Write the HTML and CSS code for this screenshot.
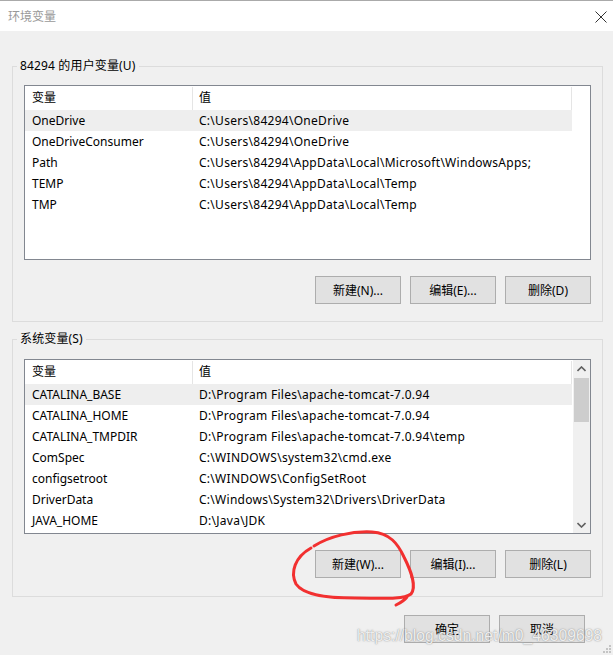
FILE: index.html
```html
<!DOCTYPE html>
<html lang="zh-CN">
<head>
<meta charset="utf-8">
<title>环境变量</title>
<link rel="stylesheet" href="styles.css">
</head>
<body>
<div class="window">
  <div class="titlebar">
    <span class="title">环境变量</span>
    <svg class="close" width="12" height="12" viewBox="0 0 12 12"><path d="M0.5 0.5L11.5 11.5M11.5 0.5L0.5 11.5" stroke="#333" stroke-width="1" fill="none"/></svg>
  </div>
  <div class="content">
    <fieldset class="group group-user">
      <legend>84294 的用户变量(U)</legend>
      <div class="lv lv-user">
        <div class="lv-main">
          <div class="lv-row lv-head"><div class="c1">变量</div><div class="c2">值</div></div>
          <div class="lv-row sel"><div class="c1">OneDrive</div><div class="c2">C:\Users\84294\OneDrive</div></div>
          <div class="lv-row"><div class="c1">OneDriveConsumer</div><div class="c2">C:\Users\84294\OneDrive</div></div>
          <div class="lv-row"><div class="c1">Path</div><div class="c2">C:\Users\84294\AppData\Local\Microsoft\WindowsApps;</div></div>
          <div class="lv-row"><div class="c1">TEMP</div><div class="c2">C:\Users\84294\AppData\Local\Temp</div></div>
          <div class="lv-row"><div class="c1">TMP</div><div class="c2">C:\Users\84294\AppData\Local\Temp</div></div>
        </div>
        <div class="lv-side"></div>
      </div>
      <div class="btns">
        <button class="btn">新建(N)...</button>
        <button class="btn">编辑(E)...</button>
        <button class="btn">删除(D)</button>
      </div>
    </fieldset>

    <fieldset class="group group-sys">
      <legend>系统变量(S)</legend>
      <div class="lv lv-sys">
        <div class="lv-main">
          <div class="lv-row lv-head"><div class="c1">变量</div><div class="c2">值</div></div>
          <div class="lv-row sel"><div class="c1">CATALINA_BASE</div><div class="c2">D:\Program Files\apache-tomcat-7.0.94</div></div>
          <div class="lv-row"><div class="c1">CATALINA_HOME</div><div class="c2">D:\Program Files\apache-tomcat-7.0.94</div></div>
          <div class="lv-row"><div class="c1">CATALINA_TMPDIR</div><div class="c2">D:\Program Files\apache-tomcat-7.0.94\temp</div></div>
          <div class="lv-row"><div class="c1">ComSpec</div><div class="c2">C:\WINDOWS\system32\cmd.exe</div></div>
          <div class="lv-row"><div class="c1">configsetroot</div><div class="c2">C:\WINDOWS\ConfigSetRoot</div></div>
          <div class="lv-row"><div class="c1">DriverData</div><div class="c2">C:\Windows\System32\Drivers\DriverData</div></div>
          <div class="lv-row"><div class="c1">JAVA_HOME</div><div class="c2">D:\Java\JDK</div></div>
        </div>
        <div class="scrollbar">
          <div class="sb-arrow">
            <svg width="9" height="6" viewBox="0 0 9 6"><path d="M0.5 5L4.5 1L8.5 5" stroke="#606060" stroke-width="1.6" fill="none"/></svg>
          </div>
          <div class="sb-track"><div class="sb-thumb"></div></div>
          <div class="sb-arrow">
            <svg width="9" height="6" viewBox="0 0 9 6"><path d="M0.5 1L4.5 5L8.5 1" stroke="#606060" stroke-width="1.6" fill="none"/></svg>
          </div>
        </div>
      </div>
      <div class="btns">
        <button class="btn">新建(W)...</button>
        <button class="btn">编辑(I)...</button>
        <button class="btn">删除(L)</button>
      </div>
    </fieldset>

    <div class="dlg-btns">
      <button class="btn">确定</button>
      <button class="btn">取消</button>
    </div>
  </div>

  <svg class="scribble" width="613" height="655" viewBox="0 0 613 655">
    <path d="M314 546 C 330 536, 352 531, 372 532 C 390 533, 398 544, 404 557 C 411 571, 417 586, 411 594 C 403 600, 380 598, 355 598 C 330 598, 304 596, 296 584 C 290 572, 295 557, 311 548 M407 597 C 404 601, 400 603, 396 605" stroke="#f23030" stroke-width="3" fill="none" stroke-linecap="round" stroke-linejoin="round"/>
  </svg>
  <div class="watermark">https://blog.csdn.net/m0_46309698</div>
  <svg class="grip" width="9" height="9" viewBox="0 0 9 9">
    <rect x="6" y="0" width="2" height="2" fill="#c4c4c4"/>
    <rect x="3" y="3" width="2" height="2" fill="#c4c4c4"/>
    <rect x="6" y="3" width="2" height="2" fill="#c4c4c4"/>
    <rect x="0" y="6" width="2" height="2" fill="#c4c4c4"/>
    <rect x="3" y="6" width="2" height="2" fill="#c4c4c4"/>
    <rect x="6" y="6" width="2" height="2" fill="#c4c4c4"/>
  </svg>
</div>
</body>
</html>
```

FILE: styles.css
```css
* { box-sizing: border-box; }

html, body {
  margin: 0;
  padding: 0;
}

body {
  width: 613px;
  height: 655px;
  overflow: hidden;
  background: #f0f0f0;
  font-family: "Noto Sans", "Noto Sans CJK SC", sans-serif;
  font-size: 12px;
  color: #000;
}

.window {
  position: relative;
  width: 613px;
  height: 655px;
  overflow: hidden;
  background: #f0f0f0;
}

.titlebar {
  height: 31px;
  background: #fff;
  border-top: 1px solid #aaaaaa;
  display: flex;
  align-items: center;
  justify-content: space-between;
  padding: 0 5px 0 8px;
}

.title {
  color: #999;
  font-size: 12px;
  line-height: 16px;
  font-family: "Noto Sans CJK SC", sans-serif;
}

.close {
  margin-right: 1px;
  margin-top: 1px;
}

.content {
  display: flex;
  flex-direction: column;
}

.group {
  margin: 0 10px 0 12px;
  padding: 11px 11px 16px 11px;
  border: 1px solid #dcdcdc;
  min-width: 0;
}

.group-user {
  margin-top: 27px;
  padding-bottom: 17px;
}

.group-sys {
  margin-top: 9px;
  padding-top: 12px;
  padding-bottom: 18px;
}

.group legend {
  margin-left: -7px;
  padding: 0 3px;
  line-height: 16px;
  height: 16px;
  letter-spacing: 0.15px;
  font-family: "Noto Sans", "Noto Sans CJK SC", sans-serif;
}

.lv {
  border: 1px solid #828790;
  background: #fff;
  display: grid;
  grid-template-columns: 1fr 17px;
  overflow: hidden;
}

.lv-user { height: 175px; }
.lv-sys { height: 175px; }

.lv-main {
  overflow: hidden;
  padding-right: 1px;
}

.lv-row {
  display: grid;
  grid-template-columns: 168px 1fr;
  height: 21px;
  line-height: 21px;
  white-space: nowrap;
}

.lv-row .c1 { padding-left: 7px; overflow: hidden; }
.lv-row .c2 { padding-left: 6px; overflow: hidden; letter-spacing: 0.28px; }

.lv-head {
  height: 24px;
  line-height: 24px;
}

.lv-head .c1,
.lv-head .c2 {
  border-right: 1px solid #e5e5e5;
  height: 23px;
  margin-top: 1px;
  line-height: 22px;
  letter-spacing: 0;
}

.lv-row.sel {
  background: #eeeeee;
}

.scrollbar {
  background: #f0f0f0;
  display: flex;
  flex-direction: column;
}

.sb-arrow {
  height: 17px;
  display: flex;
  align-items: center;
  justify-content: center;
}

.sb-track {
  flex: 1;
  padding: 1px 1px 0 1px;
}

.sb-thumb {
  height: 44px;
  background: #cdcdcd;
}

.btns {
  display: flex;
  justify-content: flex-end;
  gap: 9px;
}

.group-user .btns { margin-top: 16px; }
.group-sys .btns { margin-top: 16px; }

.btn {
  width: 86px;
  height: 28px;
  background: #e1e1e1;
  border: 1px solid #adadad;
  font-family: "Noto Sans", "Noto Sans CJK SC", sans-serif;
  font-size: 12px;
  color: #000;
  padding: 0;
  border-radius: 0;
}

.dlg-btns {
  display: flex;
  justify-content: flex-end;
  gap: 9px;
  margin-top: 18px;
  margin-right: 28px;
}

.scribble {
  position: absolute;
  left: 0;
  top: 0;
  pointer-events: none;
}

.watermark {
  position: absolute;
  left: 357px;
  top: 626px;
  font-family: "Liberation Sans", sans-serif;
  font-size: 15.7px;
  line-height: 20px;
  color: rgba(255, 255, 255, 0.85);
  text-shadow: 0 0 1px rgba(110, 110, 110, 0.7), 0 0 2px rgba(150, 150, 150, 0.5);
  white-space: nowrap;
}

.grip {
  position: absolute;
  right: 1px;
  bottom: 1px;
}
```
